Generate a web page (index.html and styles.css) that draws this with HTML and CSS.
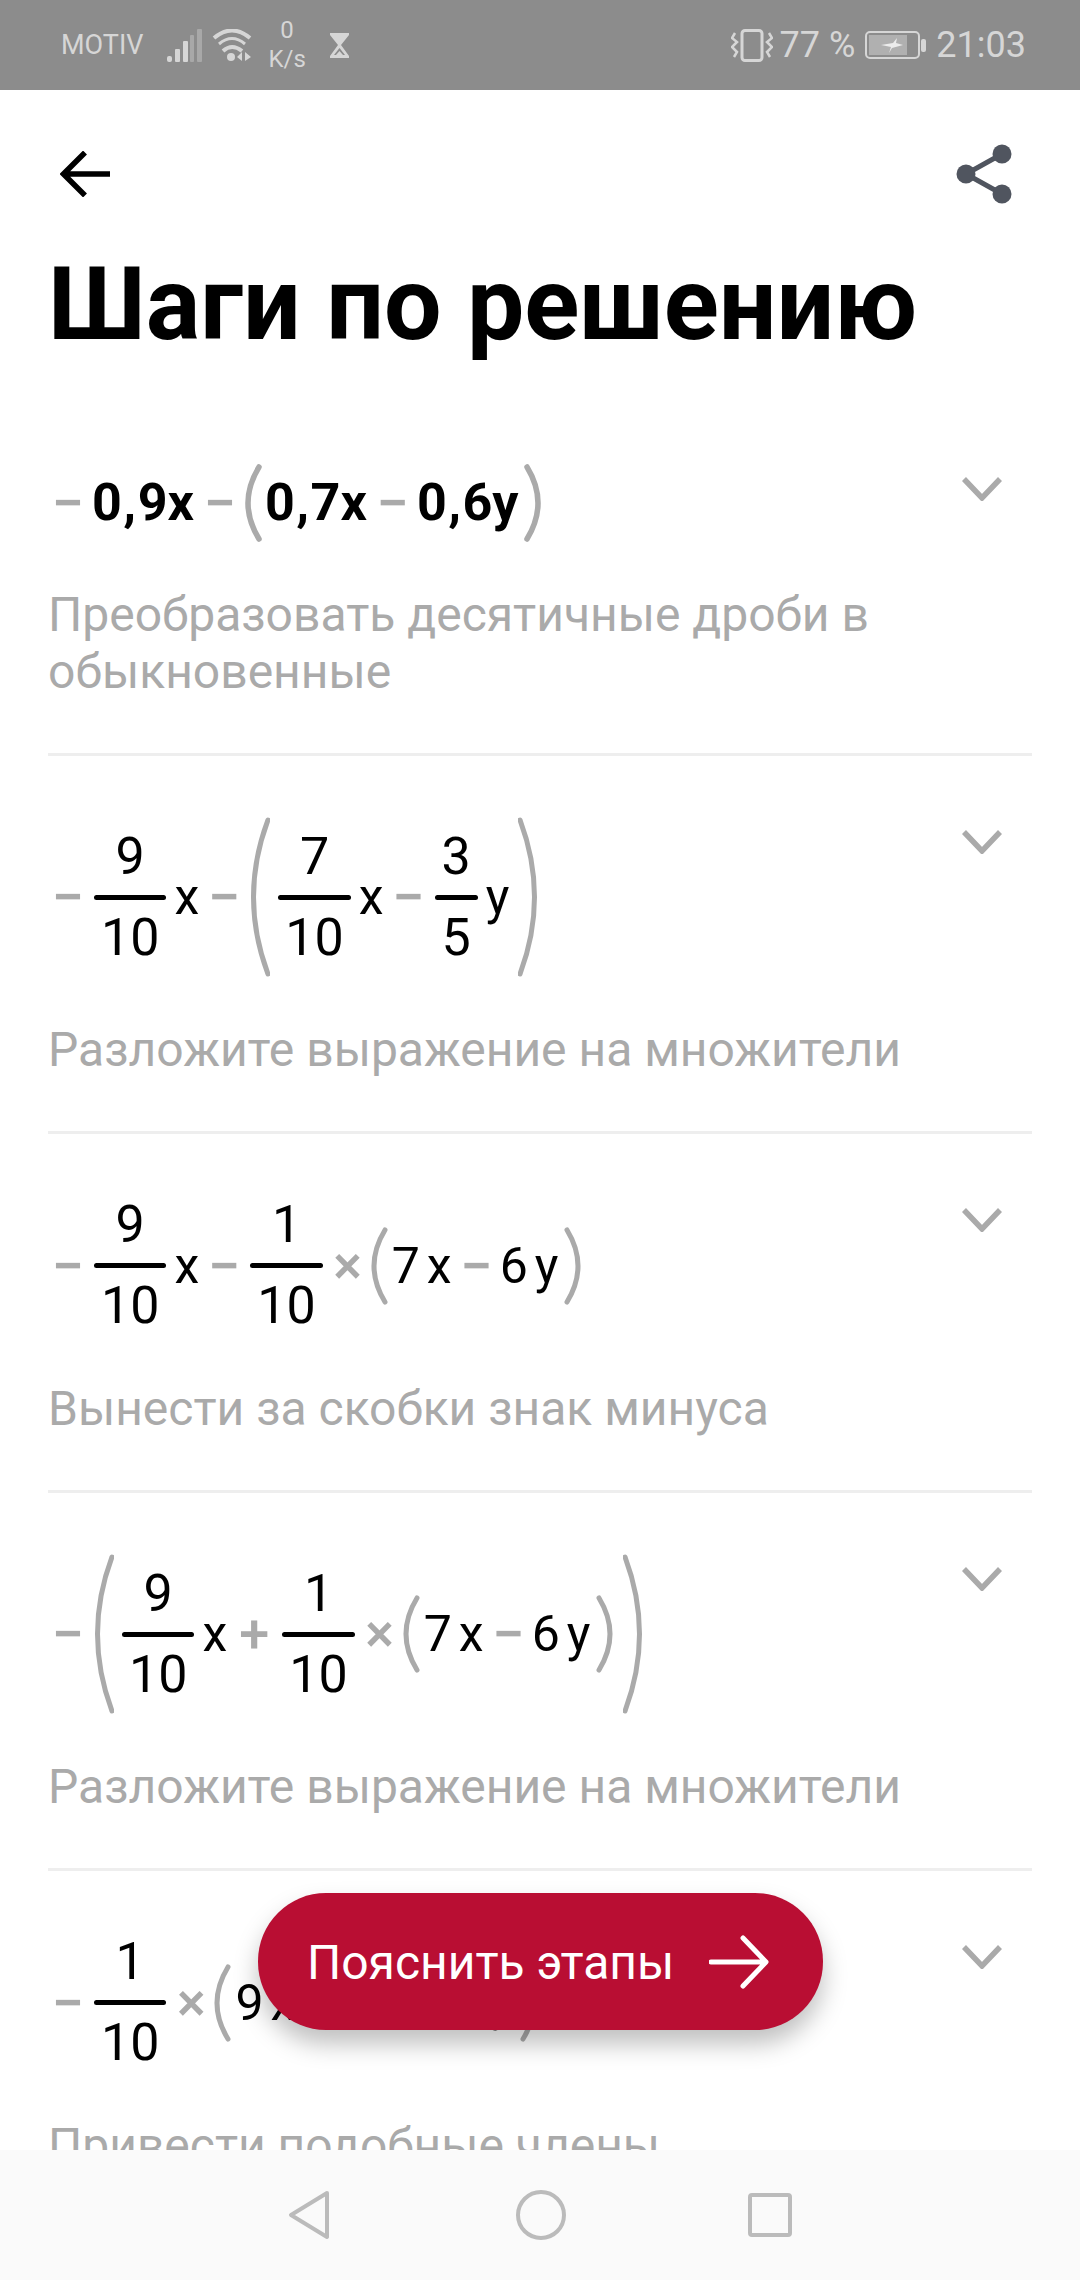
FILE: index.html
```html
<!DOCTYPE html>
<html lang="ru">
<head>
  <meta charset="UTF-8">
  <meta name="viewport" content="width=device-width, initial-scale=1.0">
  <title>Шаги по решению</title>
  <link rel="stylesheet" href="styles.css">
</head>
<body>
  <div class="screen">
    <!-- Status bar -->
    <div class="statusBar">
      <div class="statusGroup">
        <span class="carrier">MOTIV</span>
        <svg class="signalIcon" viewBox="0 0 35 33" width="35" height="33">
          <rect x="0" y="27" width="5" height="6" rx="2" fill="#d6d6d6"/>
          <rect x="8" y="20" width="5" height="13" rx="1" fill="#d6d6d6"/>
          <rect x="16" y="12" width="5" height="21" rx="1" fill="#d6d6d6"/>
          <rect x="23" y="6" width="4" height="27" rx="1" fill="#a8a8a8"/>
          <rect x="30" y="0" width="5" height="33" rx="1" fill="#a8a8a8"/>
        </svg>
        <svg class="wifiIcon" viewBox="0 0 40 33" width="40" height="33">
          <path d="M2 9 Q20 -6 38 9" fill="none" stroke="#d6d6d6" stroke-width="4"/>
          <path d="M7 15 Q20 4 33 15" fill="none" stroke="#d6d6d6" stroke-width="3"/>
          <path d="M11 22 Q20 14 30 22" fill="none" stroke="#d6d6d6" stroke-width="4"/>
          <circle cx="19" cy="28" r="4" fill="#d6d6d6"/>
          <path d="M30 23 L30 32 L25 28 Z M33 23 L33 32 L39 28 Z" fill="#d6d6d6"/>
        </svg>
        <div class="netSpeed"><span>0</span><span>K/s</span></div>
        <svg class="glassIcon" viewBox="0 0 19 25" width="19" height="25">
          <path d="M0 0 H19 V2 L11 12 L19 23 V25 H0 V23 L8 12 L0 2 Z" fill="#d6d6d6"/>
          <path d="M9.5 15 L15 22 H4 Z" fill="#8c8c8c"/>
          <path d="M9.5 18 L13 22 H6 Z" fill="#d6d6d6"/>
        </svg>
      </div>
      <div class="statusGroup">
        <svg class="vibrateIcon" viewBox="0 0 42 33" width="42" height="33">
          <rect x="11" y="1.5" width="20" height="30" rx="3" fill="none" stroke="#d6d6d6" stroke-width="3"/>
          <path d="M4 4 L1 9 L6 13 L1 18 L6 23 L3 28 M38 4 L41 9 L36 13 L41 18 L36 23 L39 28" fill="none" stroke="#d6d6d6" stroke-width="2.5"/>
        </svg>
        <span class="statusText batteryText">77 %</span>
        <svg class="batteryIcon" viewBox="0 0 61 28" width="61" height="28">
          <rect x="1" y="1" width="53" height="26" rx="4" fill="none" stroke="#d6d6d6" stroke-width="2"/>
          <rect x="4" y="4" width="38" height="20" fill="#b0b0b0"/>
          <path d="M16 14 L28 12 L32 7 L31 12 L38 14 L27 17 L24 22 L26 16 Z" fill="#ececec"/>
          <rect x="56" y="8" width="5" height="13" rx="2" fill="#d6d6d6"/>
        </svg>
        <span class="statusText">21:03</span>
      </div>
    </div>

    <div class="content">
      <div class="toolbar">
        <svg class="backIcon" viewBox="0 0 50 46" width="50" height="46">
          <path d="M50 23 H4 M25 1.5 L3.5 23 L25 44.5" fill="none" stroke="#000" stroke-width="5.5"/>
        </svg>
        <svg class="shareIcon" viewBox="0 0 56 60" width="56" height="60">
          <path d="M46 10 L10 30 L46 50" fill="none" stroke="#50555f" stroke-width="5"/>
          <circle cx="46" cy="10" r="9.5" fill="#50555f"/>
          <circle cx="10" cy="30" r="9.5" fill="#50555f"/>
          <circle cx="46" cy="50" r="9.5" fill="#50555f"/>
        </svg>
      </div>

      <h1 class="pageTitle">Шаги по решению</h1>

      <div class="stepList">
        <div class="step">
          <div class="stepHead">
            <div class="expr exprBold">
              <span class="op">−</span>
              <span class="num">0,9</span><span class="var">x</span>
              <span class="op">−</span>
              <svg class="paren parenOpen" viewBox="0 0 18 78" width="18" height="78"><path d="M15 3 Q-7 39 15 75" fill="none" stroke="#aaa" stroke-width="5.5" stroke-linecap="round"/></svg>
              <span class="num">0,7</span><span class="var">x</span>
              <span class="op">−</span>
              <span class="num">0,6</span><span class="var">y</span>
              <svg class="paren parenClose" viewBox="0 0 18 78" width="18" height="78"><path d="M3 3 Q25 39 3 75" fill="none" stroke="#aaa" stroke-width="5.5" stroke-linecap="round"/></svg>
            </div>
            <svg class="chevron" viewBox="0 0 40 24" width="40" height="24"><path d="M2 2 L20 21 L38 2" fill="none" stroke="#aaa" stroke-width="5.5"/></svg>
          </div>
          <p class="stepNote">Преобразовать десятичные дроби в обыкновенные</p>
        </div>

        <div class="step">
          <div class="stepHead">
            <div class="expr">
              <span class="op">−</span>
              <div class="frac"><span>9</span><i class="fracBar"></i><span>10</span></div>
              <span class="var">x</span>
              <span class="op">−</span>
              <svg class="parenBigOpen" viewBox="0 0 20 160" width="20" height="160"><path d="M18 3 Q-11 80 18 157" fill="none" stroke="#aaa" stroke-width="5" stroke-linecap="round"/></svg>
              <div class="frac"><span>7</span><i class="fracBar"></i><span>10</span></div>
              <span class="var">x</span>
              <span class="op">−</span>
              <div class="frac"><span>3</span><i class="fracBar"></i><span>5</span></div>
              <span class="var">y</span>
              <svg class="parenBigClose" viewBox="0 0 20 160" width="20" height="160"><path d="M2 3 Q31 80 2 157" fill="none" stroke="#aaa" stroke-width="5" stroke-linecap="round"/></svg>
            </div>
            <svg class="chevron" viewBox="0 0 40 24" width="40" height="24"><path d="M2 2 L20 21 L38 2" fill="none" stroke="#aaa" stroke-width="5.5"/></svg>
          </div>
          <p class="stepNote">Разложите выражение на множители</p>
        </div>

        <div class="step">
          <div class="stepHead">
            <div class="expr">
              <span class="op">−</span>
              <div class="frac"><span>9</span><i class="fracBar"></i><span>10</span></div>
              <span class="var">x</span>
              <span class="op">−</span>
              <div class="frac"><span>1</span><i class="fracBar"></i><span>10</span></div>
              <span class="op times">×</span>
              <svg class="paren parenOpen" viewBox="0 0 18 78" width="18" height="78"><path d="M15 3 Q-7 39 15 75" fill="none" stroke="#aaa" stroke-width="5" stroke-linecap="round"/></svg>
              <span class="num">7</span><span class="var">x</span>
              <span class="op">−</span>
              <span class="num">6</span><span class="var">y</span>
              <svg class="paren parenClose" viewBox="0 0 18 78" width="18" height="78"><path d="M3 3 Q25 39 3 75" fill="none" stroke="#aaa" stroke-width="5" stroke-linecap="round"/></svg>
            </div>
            <svg class="chevron" viewBox="0 0 40 24" width="40" height="24"><path d="M2 2 L20 21 L38 2" fill="none" stroke="#aaa" stroke-width="5.5"/></svg>
          </div>
          <p class="stepNote">Вынести за скобки знак минуса</p>
        </div>

        <div class="step">
          <div class="stepHead">
            <div class="expr">
              <span class="op">−</span>
              <svg class="parenBigOpen" viewBox="0 0 20 160" width="20" height="160"><path d="M18 3 Q-11 80 18 157" fill="none" stroke="#aaa" stroke-width="5" stroke-linecap="round"/></svg>
              <div class="frac"><span>9</span><i class="fracBar"></i><span>10</span></div>
              <span class="var">x</span>
              <span class="op plus">+</span>
              <div class="frac"><span>1</span><i class="fracBar"></i><span>10</span></div>
              <span class="op times">×</span>
              <svg class="paren parenOpen" viewBox="0 0 18 78" width="18" height="78"><path d="M15 3 Q-7 39 15 75" fill="none" stroke="#aaa" stroke-width="5" stroke-linecap="round"/></svg>
              <span class="num">7</span><span class="var">x</span>
              <span class="op">−</span>
              <span class="num">6</span><span class="var">y</span>
              <svg class="paren parenClose" viewBox="0 0 18 78" width="18" height="78"><path d="M3 3 Q25 39 3 75" fill="none" stroke="#aaa" stroke-width="5" stroke-linecap="round"/></svg>
              <svg class="parenBigClose" viewBox="0 0 20 160" width="20" height="160"><path d="M2 3 Q31 80 2 157" fill="none" stroke="#aaa" stroke-width="5" stroke-linecap="round"/></svg>
            </div>
            <svg class="chevron" viewBox="0 0 40 24" width="40" height="24"><path d="M2 2 L20 21 L38 2" fill="none" stroke="#aaa" stroke-width="5.5"/></svg>
          </div>
          <p class="stepNote">Разложите выражение на множители</p>
        </div>

        <div class="step">
          <div class="stepHead">
            <div class="expr">
              <span class="op">−</span>
              <div class="frac"><span>1</span><i class="fracBar"></i><span>10</span></div>
              <span class="op times">×</span>
              <svg class="paren parenOpen" viewBox="0 0 18 78" width="18" height="78"><path d="M15 3 Q-7 39 15 75" fill="none" stroke="#aaa" stroke-width="5" stroke-linecap="round"/></svg>
              <span class="num">9</span><span class="var">x</span>
              <span class="op plus">+</span>
              <span class="num">7</span><span class="var">x</span>
              <span class="op">−</span>
              <span class="num">6</span><span class="var">y</span>
              <svg class="paren parenClose" viewBox="0 0 18 78" width="18" height="78"><path d="M3 3 Q25 39 3 75" fill="none" stroke="#aaa" stroke-width="5" stroke-linecap="round"/></svg>
            </div>
            <svg class="chevron" viewBox="0 0 40 24" width="40" height="24"><path d="M2 2 L20 21 L38 2" fill="none" stroke="#aaa" stroke-width="5.5"/></svg>
          </div>
          <p class="stepNote">Привести подобные члены</p>
        </div>
      </div>
    </div>

    <button class="explainButton">
      <span class="explainLabel">Пояснить этапы</span>
      <svg viewBox="0 0 60 54" width="60" height="54"><path d="M2 27 H56 M34 3 L57 27 L34 51" fill="none" stroke="#fff" stroke-width="5" stroke-linecap="round" stroke-linejoin="round"/></svg>
    </button>

    <!-- Navigation bar -->
    <div class="navBar">
      <svg class="navBack" viewBox="0 0 42 50" width="42" height="50"><path d="M39 3 L3 25 L39 47 Z" fill="none" stroke="#bbb" stroke-width="4" stroke-linejoin="round"/></svg>
      <svg class="navHome" viewBox="0 0 50 50" width="50" height="50"><circle cx="25" cy="25" r="23" fill="none" stroke="#bbb" stroke-width="4"/></svg>
      <svg viewBox="0 0 44 44" width="44" height="44"><rect x="2" y="2" width="40" height="40" rx="2" fill="none" stroke="#bbb" stroke-width="4"/></svg>
    </div>
  </div>
</body>
</html>
```

FILE: styles.css
```css
body {
  margin: 0;
  background-color: #fff;
  font-family: Roboto, "Liberation Sans", sans-serif;
}

.screen {
  position: relative;
  display: flex;
  flex-direction: column;
  width: 1080px;
  height: 2280px;
  overflow: hidden;
}

.statusBar {
  display: flex;
  justify-content: space-between;
  align-items: center;
  flex-shrink: 0;
  height: 90px;
  padding: 0 54px 0 61px;
  background-color: #8c8c8c;
  color: #d6d6d6;
}

.statusGroup {
  display: flex;
  align-items: center;
}

.carrier {
  font-size: 27px;
}

.signalIcon {
  margin-left: 24px;
}

.wifiIcon {
  margin-left: 10px;
}

.netSpeed {
  display: flex;
  flex-direction: column;
  align-items: center;
  margin-left: 16px;
  font-size: 24px;
  line-height: 29px;
}

.glassIcon {
  margin-left: 24px;
}

.statusText {
  font-size: 36px;
}

.batteryText {
  margin: 0 10px 0 7px;
}

.batteryIcon {
  margin-right: 10px;
}

.content {
  flex: 1;
  min-height: 0;
  overflow: hidden;
}

.toolbar {
  display: flex;
  justify-content: space-between;
  align-items: center;
  height: 60px;
  padding: 54px 68px 0 60px;
}

.pageTitle {
  margin: 41px 0 0 48px;
  font-size: 102px;
  font-weight: 700;
  line-height: 118px;
  color: #000;
}

.stepList {
  margin: 40px 48px 0;
}

.step {
  padding: 61px 0 53px;
  border-bottom: 3px solid #eee;
}

.stepHead {
  display: flex;
  justify-content: space-between;
  align-items: flex-start;
}

.expr {
  display: flex;
  align-items: center;
  margin-left: 9px;
  font-size: 50px;
  line-height: 60px;
  color: #000;
}

.op {
  display: flex;
  justify-content: center;
  width: 22px;
  margin: 0 15px 0 14px;
  color: #aaa;
  font-size: 58px;
  font-weight: 500;
}

.op:first-child {
  margin-left: 0;
}

.times {
  margin: 0 11px 0 6px;
  font-size: 54px;
}

.plus {
  width: 26px;
  font-size: 54px;
}

.num {
  margin: 0 7px 0 -3px;
}

.parenOpen {
  margin-right: 7px;
}

.parenClose {
  margin-left: 6px;
}

.parenBigOpen {
  margin-right: 8px;
}

.parenBigClose {
  margin-left: 9px;
}

/* first line is bolder and a bit larger than the others */
.exprBold {
  font-size: 52px;
  font-weight: 700;
}

.exprBold .op {
  margin: 0 13px 0 15px;
}

.exprBold .op:first-child {
  margin-left: 0;
}

.exprBold .num {
  margin: 0 -1.5px 0 0;
  letter-spacing: 1.5px;
}

.exprBold .parenOpen {
  margin-right: 3px;
}

.exprBold .parenClose {
  margin-left: 5px;
}

.frac {
  display: flex;
  flex-direction: column;
  margin-right: 8px;
  font-size: 52px;
  text-align: center;
}

.frac span {
  padding: 0 7px;
}

.fracBar {
  display: block;
  height: 5px;
  margin: 8px 0;
  border-radius: 3px;
  background-color: #000;
}

.chevron {
  margin: 13px 30px 0 0;
}

.stepNote {
  margin: 44px 0 0;
  font-size: 48px;
  line-height: 57px;
  color: #aaa;
}

.explainButton {
  position: absolute;
  left: 258px;
  top: 1893px;
  display: flex;
  align-items: center;
  justify-content: space-between;
  width: 565px;
  height: 137px;
  padding: 0 54px 0 49px;
  border: none;
  border-radius: 68px;
  background-color: #b90e33;
  box-shadow: 0 14px 24px rgba(0, 0, 0, 0.25);
  color: #fff;
  font-family: Roboto, sans-serif;
  font-size: 48px;
}

.explainLabel {
  margin-top: 2px;
}

.navBar {
  position: absolute;
  left: 0;
  right: 0;
  bottom: 0;
  display: flex;
  align-items: center;
  height: 130px;
  padding-left: 288px;
  box-sizing: border-box;
  background-color: #fafafa;
}

.navBack {
  margin-right: 186px;
}

.navHome {
  margin-right: 182px;
}
```
